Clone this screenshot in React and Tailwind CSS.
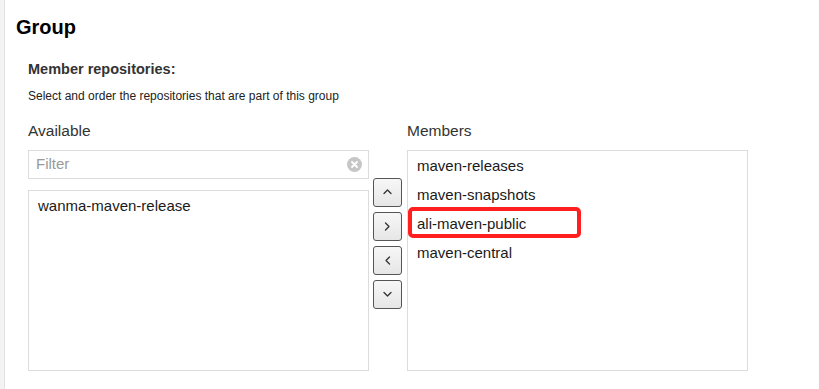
import React from "react";

const available = ["wanma-maven-release"];
const members = ["maven-releases", "maven-snapshots", "ali-maven-public", "maven-central"];

function Chevron({ dir }) {
  const paths = {
    up: "M1 5.5 L4.5 2 L8 5.5",
    down: "M1 2.5 L4.5 6 L8 2.5",
    right: "M2.5 1 L6 4.5 L2.5 8",
    left: "M6.5 1 L3 4.5 L6.5 8",
  };
  return (
    <svg width="9" height="9" viewBox="0 0 9 9" fill="none">
      <path d={paths[dir]} stroke="#333" strokeWidth="1.3" strokeLinecap="round" strokeLinejoin="round" />
    </svg>
  );
}

function MoveButton({ dir }) {
  return (
    <button className="w-[29px] h-[29px] flex items-center justify-center rounded-[3px] border border-[#555] bg-gradient-to-b from-[#f7f7f7] to-[#e6e6e6]">
      <Chevron dir={dir} />
    </button>
  );
}

function ListRow({ text }) {
  return <div className="h-[29px] leading-[29px] pl-[9px] text-[15px] text-[#1a1a1a]">{text}</div>;
}

export default function App() {
  return (
    <div className="flex w-[819px] h-[389px] bg-white overflow-hidden" style={{ fontFamily: '"Liberation Sans", Arial, sans-serif' }}>
      <div className="w-[5px] bg-[#f3f3f3] border-r border-[#e2e2e2]" />
      <div className="flex-1 pl-[11px]">
        <h1 className="pt-[15px] text-[20px] leading-[24px] font-bold text-black">Group</h1>
        <div className="pl-[12px]">
          <h2 className="mt-[21px] text-[14.5px] leading-[18px] font-bold text-[#333]">Member repositories:</h2>
          <p className="mt-[10px] text-[12px] leading-[16px] text-[#222]">
            Select and order the repositories that are part of this group
          </p>
          <div className="mt-[17px] flex items-start">
            <div className="w-[341px]">
              <div className="text-[15.5px] leading-[20px] text-[#333] mb-[9px]">Available</div>
              <div className="h-[29px] border border-[#dcdcdc] flex items-center pl-[7px] pr-[6px]">
                <span className="flex-1 text-[15px] text-[#9a9a9a]">Filter</span>
                <span className="w-[15px] h-[15px] rounded-full bg-[#c6c6c6] flex items-center justify-center">
                  <svg width="7" height="7" viewBox="0 0 7 7">
                    <path d="M1 1 L6 6 M6 1 L1 6" stroke="#fff" strokeWidth="1.8" strokeLinecap="round" />
                  </svg>
                </span>
              </div>
              <div className="mt-[11px] h-[181px] border border-[#dcdcdc]">
                {available.map((r) => (
                  <ListRow key={r} text={r} />
                ))}
              </div>
            </div>
            <div className="ml-[4px] mt-[57px] flex flex-col gap-[5px]">
              <MoveButton dir="up" />
              <MoveButton dir="right" />
              <MoveButton dir="left" />
              <MoveButton dir="down" />
            </div>
            <div className="ml-[5px] w-[341px]">
              <div className="text-[15.5px] leading-[20px] text-[#333] mb-[9px]">Members</div>
              <div className="relative h-[221px] border border-[#dcdcdc]">
                {members.map((r) => (
                  <ListRow key={r} text={r} />
                ))}
                <div className="absolute left-0 top-[56px] w-[173px] h-[31px] border-[4px] border-[#ff1f1f] rounded-[5px]" />
              </div>
            </div>
          </div>
        </div>
      </div>
    </div>
  );
}
